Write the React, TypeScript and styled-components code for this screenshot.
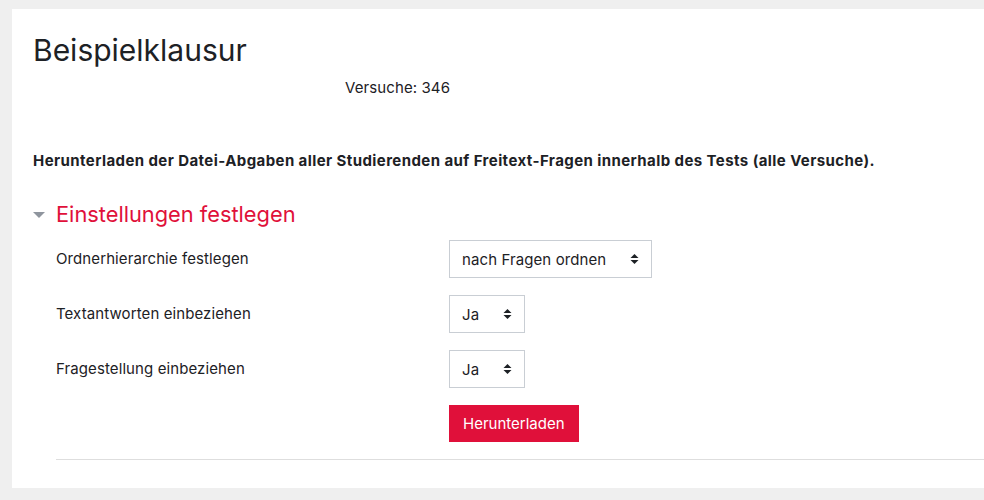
import React from "react";
import styled, { createGlobalStyle } from "styled-components";

const Global = createGlobalStyle`
  html, body { margin: 0; padding: 0; background: #efefef; }
  body { font-family: Inter, Roboto, "Liberation Sans", sans-serif; color: #1d2125; }
  * { box-sizing: border-box; }
`;

const Page = styled.div`
  padding: 9px 0 12px 12px;
  width: 1000px;
`;

const Card = styled.div`
  background: #fff;
  padding: 21px 0 28px 21px;
`;

const Title = styled.h2`
  margin: 0;
  font-size: 30px;
  font-weight: 400;
  line-height: 40px;
  color: #1d2125;
`;

const Attempts = styled.div`
  margin: 7px 0 0 312px;
  font-size: 15px;
  line-height: 22px;
  letter-spacing: 0.1px;
`;

const Intro = styled.p`
  margin: 51px 0 0 0;
  font-size: 15px;
  font-weight: 700;
  line-height: 22px;
  letter-spacing: 0.42px;
`;

const Legend = styled.div`
  display: flex;
  align-items: center;
  gap: 11px;
  margin-top: 26px;
  height: 32px;
`;

const Caret = styled.span`
  width: 0;
  height: 0;
  border-left: 6px solid transparent;
  border-right: 6px solid transparent;
  border-top: 6px solid #8f959e;
  margin-top: 1px;
`;

const LegendText = styled.span`
  font-size: 21.8px;
  color: #e0103a;
`;

const Fields = styled.div`
  display: flex;
  flex-direction: column;
  gap: 17px;
  padding-left: 23px;
  margin-top: 10px;
`;

const Row = styled.div<{ $compact?: boolean }>`
  display: grid;
  grid-template-columns: 393px auto;
  align-items: center;
  justify-items: start;
  min-height: ${(p) => (p.$compact ? "37px" : "38px")};
`;

const Label = styled.label`
  font-size: 15px;
  line-height: 22px;
  letter-spacing: 0.1px;
`;

const Select = styled.div<{ $w: number }>`
  display: flex;
  align-items: center;
  justify-content: space-between;
  width: ${(p) => p.$w}px;
  height: 38px;
  border: 1px solid #c9ced4;
  padding: 0 12px;
  font-size: 15px;
  letter-spacing: 0.1px;
  color: #1d2125;
`;

const Arrows = styled.svg`
  width: 9px;
  height: 12px;
`;

const Button = styled.button`
  display: block;
  background: #e0103a;
  color: #fff;
  border: 0;
  height: 37px;
  padding: 0 14px;
  font-family: Inter, Roboto, "Liberation Sans", sans-serif;
  font-size: 15px;
`;

const Divider = styled.hr`
  margin: 0;
  border: 0;
  border-top: 1px solid #dedede;
`;

const SelectBox = ({ value, w }: { value: string; w: number }) => (
  <Select $w={w}>
    <span>{value}</span>
    <Arrows viewBox="0 0 9 12">
      <path d="M4.5 1 L8.5 5 H0.5 Z M4.5 11 L8.5 7 H0.5 Z" fill="#1d2125" />
    </Arrows>
  </Select>
);

export default function App() {
  return (
    <>
      <Global />
      <Page>
        <Card>
          <Title>Beispielklausur</Title>
          <Attempts>Versuche: 346</Attempts>
          <Intro>
            Herunterladen der Datei-Abgaben aller Studierenden auf Freitext-Fragen innerhalb des Tests (alle Versuche).
          </Intro>
          <Legend>
            <Caret />
            <LegendText>Einstellungen festlegen</LegendText>
          </Legend>
          <Fields>
            <Row>
              <Label>Ordnerhierarchie festlegen</Label>
              <SelectBox value="nach Fragen ordnen" w={203} />
            </Row>
            <Row>
              <Label>Textantworten einbeziehen</Label>
              <SelectBox value="Ja" w={76} />
            </Row>
            <Row>
              <Label>Fragestellung einbeziehen</Label>
              <SelectBox value="Ja" w={76} />
            </Row>
            <Row $compact>
              <span />
              <Button>Herunterladen</Button>
            </Row>
            <Divider />
          </Fields>
        </Card>
      </Page>
    </>
  );
}
